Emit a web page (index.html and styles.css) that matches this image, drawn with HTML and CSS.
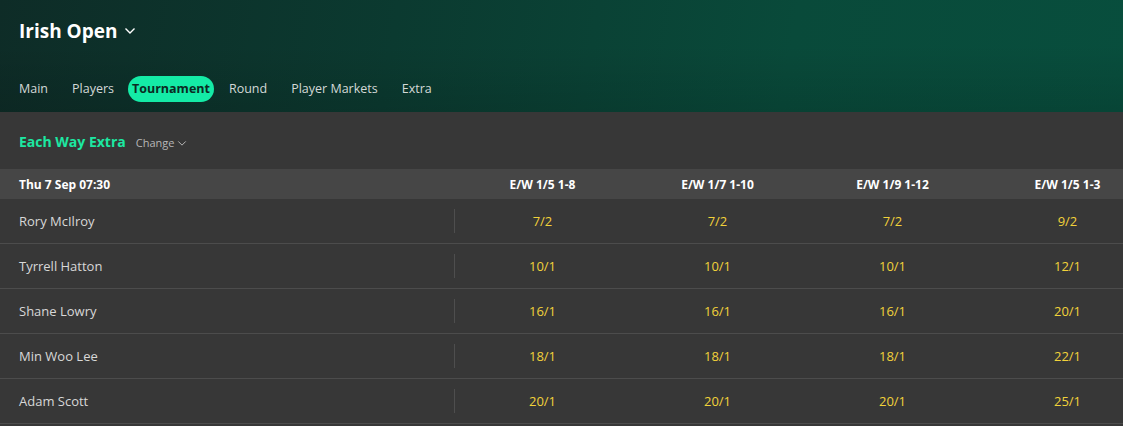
FILE: index.html
```html
<!DOCTYPE html>
<html lang="en">
<head>
    <meta charset="UTF-8">
    <meta name="viewport" content="width=device-width, initial-scale=1.0">
    <title>Irish Open - Tournament</title>
    <link rel="stylesheet" href="styles.css">
</head>
<body>
    <header class="event-header">
        <h1 class="event-title">
            Irish Open
            <svg class="chevron chevron-lg" viewBox="0 0 12 8"><path d="M1.5 1.5 L6 6 L10.5 1.5"/></svg>
        </h1>
        <nav class="tabs">
            <a class="tab">Main</a>
            <a class="tab">Players</a>
            <a class="tab active">Tournament</a>
            <a class="tab">Round</a>
            <a class="tab">Player Markets</a>
            <a class="tab">Extra</a>
        </nav>
    </header>

    <section class="market">
        <div class="market-title">
            <h2>Each Way Extra</h2>
            <span class="change">Change
                <svg class="chevron chevron-sm" viewBox="0 0 12 8"><path d="M1.5 1.5 L6 6 L10.5 1.5"/></svg>
            </span>
        </div>

        <div class="odds-table">
            <div class="row head">
                <div class="name">Thu 7 Sep 07:30</div>
                <div class="prices">
                    <div class="cell">E/W 1/5 1-8</div>
                    <div class="cell">E/W 1/7 1-10</div>
                    <div class="cell">E/W 1/9 1-12</div>
                    <div class="cell">E/W 1/5 1-3</div>
                </div>
            </div>
            <div class="row">
                <div class="name">Rory McIlroy</div>
                <div class="prices">
                    <div class="cell">7/2</div>
                    <div class="cell">7/2</div>
                    <div class="cell">7/2</div>
                    <div class="cell">9/2</div>
                </div>
            </div>
            <div class="row">
                <div class="name">Tyrrell Hatton</div>
                <div class="prices">
                    <div class="cell">10/1</div>
                    <div class="cell">10/1</div>
                    <div class="cell">10/1</div>
                    <div class="cell">12/1</div>
                </div>
            </div>
            <div class="row">
                <div class="name">Shane Lowry</div>
                <div class="prices">
                    <div class="cell">16/1</div>
                    <div class="cell">16/1</div>
                    <div class="cell">16/1</div>
                    <div class="cell">20/1</div>
                </div>
            </div>
            <div class="row">
                <div class="name">Min Woo Lee</div>
                <div class="prices">
                    <div class="cell">18/1</div>
                    <div class="cell">18/1</div>
                    <div class="cell">18/1</div>
                    <div class="cell">22/1</div>
                </div>
            </div>
            <div class="row">
                <div class="name">Adam Scott</div>
                <div class="prices">
                    <div class="cell">20/1</div>
                    <div class="cell">20/1</div>
                    <div class="cell">20/1</div>
                    <div class="cell">25/1</div>
                </div>
            </div>
        </div>
    </section>
</body>
</html>
```

FILE: styles.css
```css
body {
    margin: 0;
    font-family: "Open Sans", Arial, sans-serif;
    background-color: #373737;
    color: #d8d8d8;
    overflow: hidden;
}
.event-header {
    height: 112px;
    box-sizing: border-box;
    padding: 18px 19px 0;
    background:
        linear-gradient(180deg, rgba(0, 0, 0, 0) 40%, rgba(0, 0, 0, 0.12) 100%),
        linear-gradient(100deg, #0e2c27 0%, #0b3a30 35%, #094a3a 70%, #084e3d 100%);
}
.event-title {
    margin: 0;
    font-size: 19px;
    font-weight: 700;
    color: #ffffff;
    display: flex;
    align-items: center;
    gap: 7px;
    height: 26px;
}
.chevron {
    fill: none;
    stroke: currentColor;
    stroke-width: 1.4;
}
.chevron-lg {
    width: 12px;
    height: 8px;
}
.chevron-sm {
    width: 10px;
    height: 7px;
    stroke-width: 1.2;
}
.tabs {
    display: flex;
    align-items: center;
    margin-top: 32px;
    margin-left: -9px;
}
.tab {
    font-size: 12.5px;
    color: #d4d9d7;
    padding: 5px 9px;
    margin-right: 6px;
    border-radius: 13px;
    line-height: 16px;
}
.tab.active {
    background-color: #14eba6;
    color: #0b2a22;
    font-weight: 700;
    padding: 5px 4px;
    margin-left: -1px;
}
.market-title {
    display: flex;
    align-items: baseline;
    gap: 10px;
    height: 57px;
    padding: 20px 19px 0;
    box-sizing: border-box;
}
.market-title h2 {
    margin: 0;
    font-size: 14px;
    font-weight: 700;
    color: #1ce8a2;
}
.change {
    font-size: 11px;
    color: #b6b6b6;
}
.odds-table {
    width: 1155px;
}
.row {
    display: flex;
    align-items: center;
    height: 44px;
    border-bottom: 1px solid #4c4c4c;
}
.row.head {
    height: 30px;
    background-color: #464646;
    border-bottom: none;
    font-size: 12px;
    font-weight: 700;
    color: #ffffff;
}
.name {
    flex: 1;
    padding-left: 19px;
    font-size: 13px;
}
.row.head .name {
    font-size: 12px;
}
.prices {
    display: flex;
    border-left: 1px solid #4e4e4e;
    height: 24px;
    align-items: center;
}
.row.head .prices {
    border-left-color: transparent;
}
.cell {
    width: 175px;
    text-align: center;
    font-size: 13px;
    color: #f2d23a;
}
.row.head .cell {
    font-size: 12px;
    color: #ffffff;
}
```
